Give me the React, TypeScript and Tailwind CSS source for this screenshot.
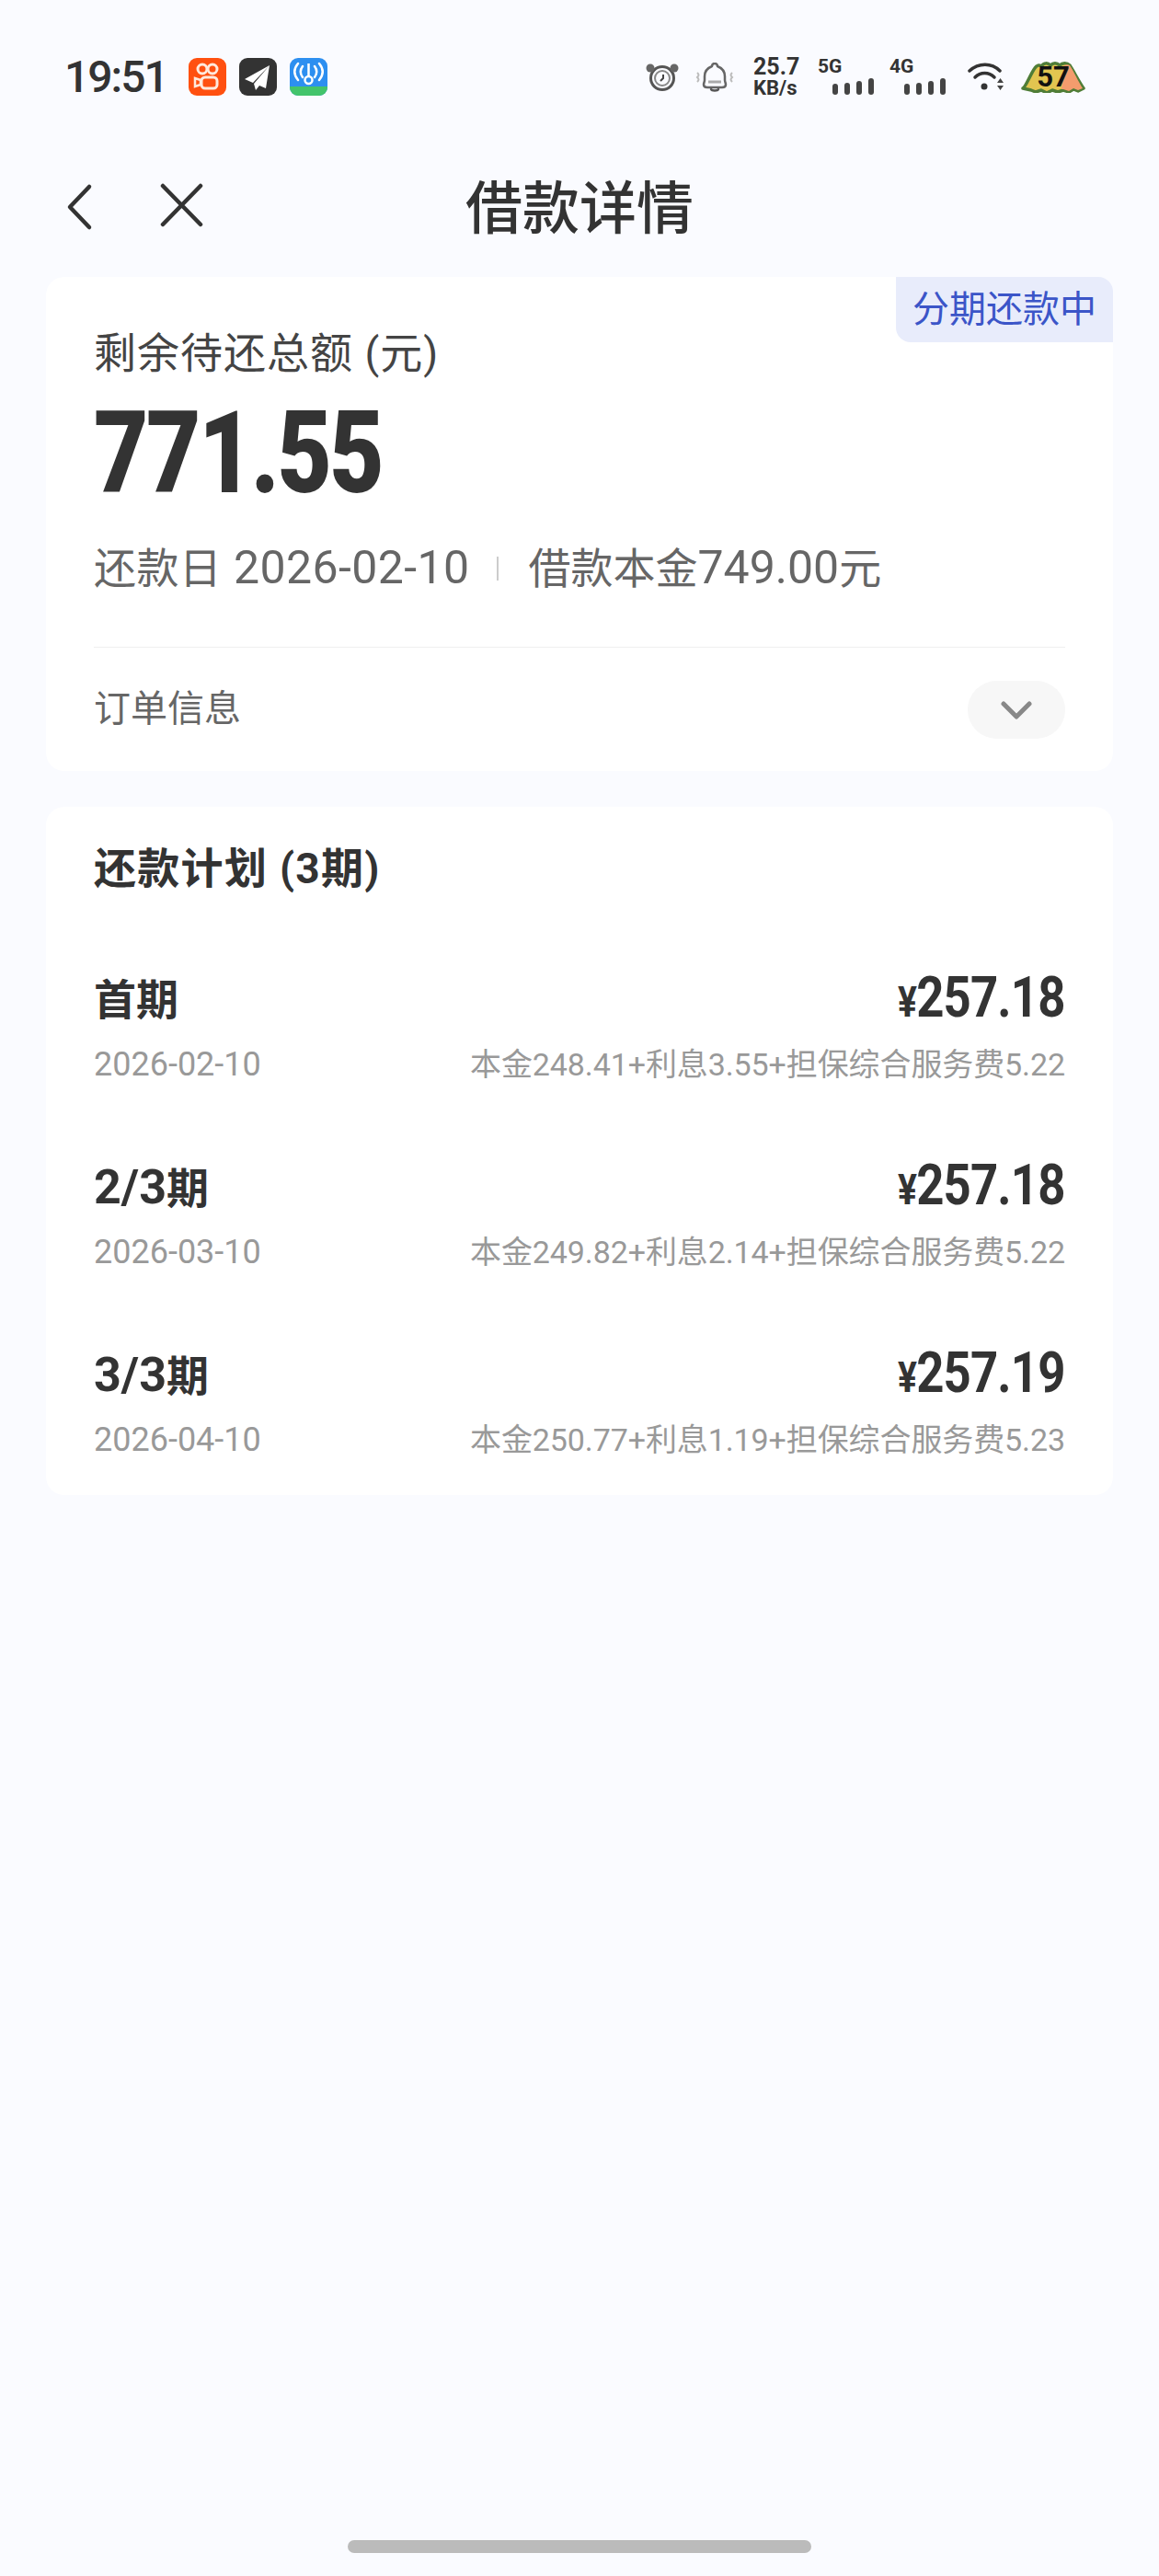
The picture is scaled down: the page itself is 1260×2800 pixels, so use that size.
import type { ReactNode } from "react";

const FONT = "font-['Roboto','Noto_Sans_CJK_SC',sans-serif]";

function Signal({ label, className }: { label: string; className: string }) {
  return (
    <div className={`relative w-[61px] h-[38px] ${className}`}>
      <span className="absolute left-0 -top-[3px] text-[21px] leading-[21px] font-bold">{label}</span>
      <div className="absolute right-0 bottom-0 flex items-end gap-[7px]">
        <div className="w-[6px] h-[12px] rounded-full bg-[#444]" />
        <div className="w-[6px] h-[13px] rounded-full bg-[#444]" />
        <div className="w-[6px] h-[15px] rounded-full bg-[#444]" />
        <div className="w-[6px] h-[18px] rounded-full bg-[#444]" />
      </div>
    </div>
  );
}

function StatusIcons() {
  return (
    <div className="flex items-center text-[#333]">
      <svg width="36" height="30" viewBox="0 0 36 30" className="mr-[18px]">
        <circle cx="18" cy="16" r="12.500" fill="none" stroke="#555" strokeWidth="3" />
        <circle cx="18" cy="16" r="8" fill="none" stroke="#888" strokeWidth="2" />
        <path d="M19 12v4l-3 3" fill="none" stroke="#444" strokeWidth="2" />
        <circle cx="5" cy="5" r="4.500" fill="#666" />
        <circle cx="31" cy="5" r="4.500" fill="#666" />
      </svg>
      <svg width="42" height="32" viewBox="0 0 42 32" className="mr-[21px]">
        <path d="M21 1c2 0 3 1 3 3 5 2 8 6 8 11v4c0 2 1 3 1 5 0 2-2 3-4 3H13c-2 0-4-1-4-3 0-2 1-3 1-5v-4c0-5 3-9 8-11 0-2 1-3 3-3z" fill="none" stroke="#666" strokeWidth="2.500" strokeLinejoin="round" />
        <path d="M17 29c1 2 7 2 8 0" fill="none" stroke="#555" strokeWidth="2.500" strokeLinecap="round" />
        <path d="M14 21h14" stroke="#aaa" strokeWidth="3" />
        <path d="M2 11c2 2 2 3 0 5 2 2 2 3 0 5M40 11c-2 2-2 3 0 5-2 2-2 3 0 5" fill="none" stroke="#bbb" strokeWidth="2" />
      </svg>
      <div className="flex flex-col items-start font-bold mr-[20px] w-[50px] -mt-[1px]">
        <span className="text-[25px] leading-[25px]">25.7</span>
        <span className="text-[22px] leading-[22px]">KB/s</span>
      </div>
      <Signal label="5G" className="mr-[17px]" />
      <Signal label="4G" className="mr-[24px]" />
      <svg width="40" height="32" viewBox="0 0 40 32" className="mr-[18px]">
        <path d="M2 9c10-9 24-9 33 0" fill="none" stroke="#333" strokeWidth="3.500" strokeLinecap="round" />
        <path d="M8 16c6-6 15-6 21 0" fill="none" stroke="#333" strokeWidth="3.500" strokeLinecap="round" />
        <circle cx="18" cy="26" r="3.500" fill="#333" />
        <path d="M32 22h7l-3.500-5zM32 25h7l-3.500 5z" fill="#444" />
      </svg>
      <div className="relative w-[70px] h-[34px] flex items-center justify-center">
        <svg width="70" height="34" viewBox="0 0 70 34" className="absolute inset-0">
          <path d="M2 29c3-1 8-15 13-22 2-3 5-4 7-2 3-4 7-4 10-1 3-3 7-3 10 0 3-3 8-3 11 0 4 6 10 18 15 25l-6 3-5-2-5 3-6-2-6 2-6-2-6 3-6-3-6 2-5-2z" fill="#e2c550" stroke="#4f7d37" strokeWidth="3.500" strokeLinejoin="round" />
          <path d="M47 4c2-1 4-1 6 0 4 6 9 17 14 25l-5 2-5-2-5 3-6-2-2 0z" fill="#f49c6d" />
        </svg>
        <span className="relative text-[31px] font-bold text-[#111] leading-none">57</span>
      </div>
    </div>
  );
}

function Plan({ name, date, amount, detail }: { name: ReactNode; date: string; amount: string; detail: string }) {
  return (
    <div className="flex flex-col">
      <div className="flex justify-between items-center h-[70px]">
        <span className="text-[46px] font-bold text-[#333]">{name}</span>
        <span className="inline-block origin-right scale-x-[.85] text-[62px] font-bold text-[#333] tracking-[-1px] -mt-[8px]">
          <span className="text-[46px]">¥</span>{amount}
        </span>
      </div>
      <div className="flex justify-between items-center mt-[13px] h-[44px]">
        <span className="text-[36px] text-[#999]">{date}</span>
        <span className="text-[34px] text-[#999] tracking-[-0.1px]">{detail}</span>
      </div>
    </div>
  );
}

export default function App() {
  return (
    <div className={`w-[1260px] h-[2800px] bg-[#fafbff] flex flex-col relative ${FONT}`}>
      <div className="h-[167px] flex items-center justify-between pl-[70px] pr-[80px] shrink-0">
        <div className="flex items-center">
          <span className="text-[48px] font-medium text-[#333] mr-[23px] leading-none tracking-[-2px]">19:51</span>
          <div className="w-[41px] h-[41px] rounded-[9px] bg-[#ff5010] flex items-center justify-center mr-[14px]">
            <svg width="32" height="34" viewBox="0 0 32 34">
              <circle cx="11" cy="8" r="5" fill="none" stroke="#ffe9dc" strokeWidth="3" />
              <circle cx="22" cy="8" r="5" fill="none" stroke="#ffe9dc" strokeWidth="3" />
              <rect x="10" y="17" width="17" height="12" rx="4" fill="none" stroke="#ffe9dc" strokeWidth="3" />
              <path d="M9 20l-6-2v9l6-2z" fill="none" stroke="#ffe9dc" strokeWidth="2.500" />
            </svg>
          </div>
          <div className="w-[41px] h-[41px] rounded-[9px] bg-[#333] flex items-center justify-center mr-[14px]">
            <svg width="32" height="32" viewBox="0 0 32 32">
              <path d="M29 3L2 18l9 4zM29 3L12 23l2 7 4-5 7 3z" fill="#fff" />
            </svg>
          </div>
          <div className="w-[41px] h-[41px] rounded-[9px] overflow-hidden bg-[#2d8ff0] flex flex-col items-center justify-between">
            <svg width="35" height="27" viewBox="0 0 35 27" className="mt-[3px]">
              <path d="M6 3c-5 6-5 12 0 18M29 3c5 6 5 12 0 18M11 6c-3 4-3 8 0 12M24 6c3 4 3 8 0 12" fill="none" stroke="#fff" strokeWidth="2.500" strokeLinecap="round" />
              <path d="M17.500 3v15" stroke="#fff" strokeWidth="2.500" />
              <circle cx="17.500" cy="21" r="4" fill="none" stroke="#fff" strokeWidth="2.500" />
            </svg>
            <div className="w-full h-[10px] bg-[#43c46b]" />
          </div>
        </div>
        <StatusIcons />
      </div>

      <div className="relative h-[116px] pt-[5px] shrink-0 flex items-center justify-center">
        <svg width="32" height="52" viewBox="0 0 32 52" className="absolute left-[70px] top-[32px]">
          <path d="M27 4L6 26l21 22" fill="none" stroke="#333" strokeWidth="4.500" strokeLinecap="round" strokeLinejoin="round" />
        </svg>
        <svg width="48" height="48" viewBox="0 0 48 48" className="absolute left-[174px] top-[32px]">
          <path d="M3 3l41 42M44 3L3 45" fill="none" stroke="#333" strokeWidth="4.500" strokeLinecap="round" />
        </svg>
        <span className="text-[62px] font-medium text-[#333] leading-none">借款详情</span>
      </div>

      <div className="mx-[50px] mt-[18px] h-[537px] bg-white rounded-[20px] relative px-[52px] shrink-0">
        <div className="absolute right-0 top-0 w-[236px] h-[71px] bg-[#e8ecfb] rounded-tr-[16px] rounded-bl-[16px] flex items-center justify-center text-[40px] text-[#3b55c8]">分期还款中</div>
        <div className="pt-[52px] text-[46px] leading-[62px] text-[#444] tracking-[1px]">剩余待还总额 (元)</div>
        <div className="w-fit origin-left scale-x-[.82] text-[125px] leading-[130px] font-black text-[#333] tracking-[-3px] mt-[13px]">771.55</div>
        <div className="flex items-center text-[50px] text-[#666] leading-[60px] mt-[29px]">
          <span className="tracking-[0.4px]"><span className="text-[46px]">还款日</span> 2026-02-10</span>
          <span className="w-[2px] h-[26px] bg-[#ccc] ml-[30px] mr-[32px]" />
          <span><span className="text-[46px]">借款本金</span>749.00<span className="text-[46px]">元</span></span>
        </div>
        <div className="h-px bg-[#f0f0f0] mt-[55px]" />
        <div className="flex items-center justify-between mt-[36px]">
          <span className="text-[40px] text-[#666] leading-[63px] -mt-[2px]">订单信息</span>
          <div className="w-[106px] h-[63px] rounded-full bg-[#f7f7f7] flex items-center justify-center">
            <svg width="36" height="22" viewBox="0 0 36 22">
              <path d="M4 4l14 14L32 4" fill="none" stroke="#888" strokeWidth="5" strokeLinecap="round" strokeLinejoin="round" />
            </svg>
          </div>
        </div>
      </div>

      <div className="mx-[50px] mt-[39px] bg-white rounded-[20px] px-[52px] pb-[38px] shrink-0">
        <div className="pt-[37px] h-[175px] text-[46px] leading-[60px] font-bold text-[#333] tracking-[1.300px]">还款计划 (3期)</div>
        <div className="flex flex-col gap-[77px]">
          <Plan name="首期" date="2026-02-10" amount="257.18" detail="本金248.41+利息3.55+担保综合服务费5.22" />
          <Plan name={<><span className="text-[52px]">2/3</span>期</>} date="2026-03-10" amount="257.18" detail="本金249.82+利息2.14+担保综合服务费5.22" />
          <Plan name={<><span className="text-[52px]">3/3</span>期</>} date="2026-04-10" amount="257.19" detail="本金250.77+利息1.19+担保综合服务费5.23" />
        </div>
      </div>

      <div className="absolute left-[378px] top-[2761px] w-[504px] h-[14px] rounded-full bg-[#bbbbbb]" />
    </div>
  );
}
